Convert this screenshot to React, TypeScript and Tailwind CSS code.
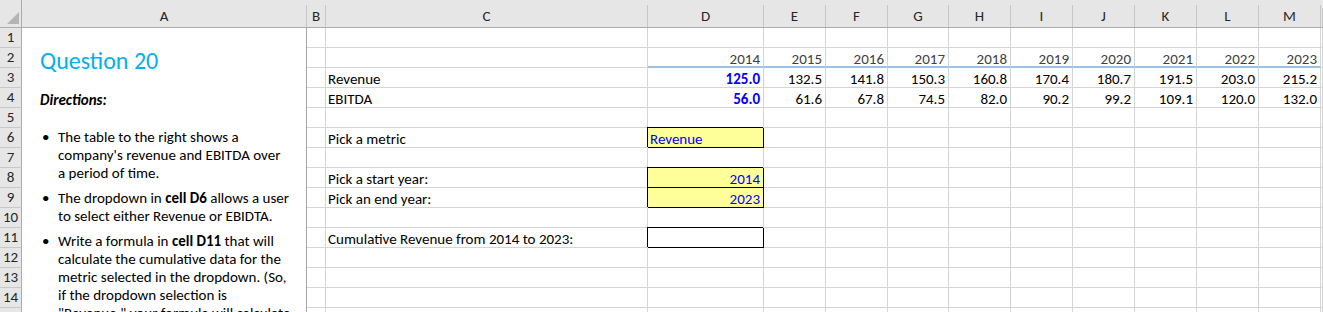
import React from "react";

const letters = ["A", "B", "C", "D", "E", "F", "G", "H", "I", "J", "K", "L", "M", ""];
const years = [2014, 2015, 2016, 2017, 2018, 2019, 2020, 2021, 2022, 2023];
const revenue = ["125.0", "132.5", "141.8", "150.3", "160.8", "170.4", "180.7", "191.5", "203.0", "215.2"];
const ebitda = ["56.0", "61.6", "67.8", "74.5", "82.0", "90.2", "99.2", "109.1", "120.0", "132.0"];

const labels: Record<number, string> = {
  3: "Revenue",
  4: "EBITDA",
  6: "Pick a metric",
  8: "Pick a start year:",
  9: "Pick an end year:",
  11: "Cumulative Revenue from 2014 to 2023:",
};

function Corner() {
  return (
    <div className="bg-[#e6e6e6] border-r border-b border-[#ababab] pt-[12px] pl-[7px]">
      <svg width="12" height="12" viewBox="0 0 12 12">
        <polygon points="12,0 12,12 0,12" fill="#b4b4b4" />
      </svg>
    </div>
  );
}

function ColHead({ l }: { l: string }) {
  return (
    <div className="flex flex-col bg-[#e6e6e6] border-b border-[#ababab]">
      <div className="h-2" />
      <div className="flex-1 flex items-center justify-center border-r border-[#c6c6c6] text-[15px] text-[#262626]">
        {l}
      </div>
    </div>
  );
}

function RowHead({ n }: { n: number }) {
  return (
    <div className="flex items-center justify-center bg-[#e6e6e6] border-r border-r-[#ababab] border-b border-b-[#c8c8c8] text-[15px] text-[#262626]">
      {n}
    </div>
  );
}

function Bullet() {
  return <span className="w-[18px] shrink-0 pl-[2px]">•</span>;
}

function Directions() {
  return (
    <div className="row-span-15 bg-white border-r border-[#a6a6a6] overflow-hidden pl-[18px] pt-[19px] text-black">
      <div className="text-[24px] leading-[28px] text-[#00b0f0] whitespace-nowrap">Question 20</div>
      <div className="mt-[16px] text-[15px] leading-[18px] font-bold italic">Directions:</div>
      <ul className="mt-[19px] text-[15px] leading-[18px] whitespace-nowrap">
        <li className="flex">
          <Bullet />
          <span>
            The table to the right shows a<br />
            company's revenue and EBITDA over<br />
            a period of time.
          </span>
        </li>
        <li className="flex mt-[7px]">
          <Bullet />
          <span>
            The dropdown in <b>cell D6</b> allows a user
            <br />
            to select either Revenue or EBIDTA.
          </span>
        </li>
        <li className="flex mt-[7px]">
          <Bullet />
          <span>
            Write a formula in <b>cell D11</b> that will
            <br />
            calculate the cumulative data for the
            <br />
            metric selected in the dropdown. (So,
            <br />
            if the dropdown selection is
            <br />
            "Revenue," your formula will calculate
            <br />
            the cumulative revenue from 2014 to 2023.)
          </span>
        </li>
      </ul>
    </div>
  );
}

const grid = "border-r border-b border-[#d4d4d4]";
const text = "pt-[3px] leading-[16px] text-[15px] whitespace-nowrap overflow-visible";

function Cell({ r, c }: { r: number; c: number }) {
  // c: 2 = B, 3 = C, 4 = D ... 13 = M, 14 = N
  if (c === 3) {
    return <div className={`${grid} ${text} pl-[2px] text-black`}>{labels[r] ?? ""}</div>;
  }
  if (c >= 4 && c <= 13) {
    const i = c - 4;
    if (r === 2) {
      return (
        <div className={`border-r border-r-[#d4d4d4] border-b-2 border-b-[#9bc2e6] ${text} pr-[3px] text-right text-[#404040]`}>
          {years[i]}
        </div>
      );
    }
    if (r === 3 || r === 4) {
      const v = r === 3 ? revenue[i] : ebitda[i];
      return (
        <div className={`${grid} ${text} pr-[3px] text-right ${i === 0 ? "text-[#0000ff] font-bold" : "text-black"}`}>
          {v}
        </div>
      );
    }
    if (c === 4 && (r === 6 || r === 8 || r === 9)) {
      return (
        <div
          className={`bg-[#ffff99] border-r border-b border-black shadow-[-1px_-1px_0_0_#000] ${text} text-[#0000ff] ${
            r === 6 ? "pl-[2px]" : "pr-[3px] text-right"
          }`}
        >
          {r === 6 ? "Revenue" : r === 8 ? "2014" : "2023"}
        </div>
      );
    }
    if (c === 4 && r === 11) {
      return <div className="bg-white border-r border-b border-black shadow-[-1px_-1px_0_0_#000]" />;
    }
  }
  return <div className={grid} />;
}

export default function App() {
  const rows = Array.from({ length: 15 }, (_, i) => i + 1);
  return (
    <div className="h-[312px] w-[1323px] overflow-hidden bg-white font-[family-name:Carlito,Lato,sans-serif]">
      <div className="grid grid-cols-[22px_285px_19px_322px_116px_62px_62px_61px_62px_62px_62px_62px_62px_62px_1fr] grid-rows-[28px_repeat(15,20px)]">
        <Corner />
        {letters.map((l, i) => (
          <ColHead key={i} l={l} />
        ))}
        {rows.map((r) => (
          <React.Fragment key={r}>
            <RowHead n={r} />
            {r === 1 && <Directions />}
            {Array.from({ length: 13 }, (_, k) => k + 2).map((c) => (
              <Cell key={c} r={r} c={c} />
            ))}
          </React.Fragment>
        ))}
      </div>
    </div>
  );
}
